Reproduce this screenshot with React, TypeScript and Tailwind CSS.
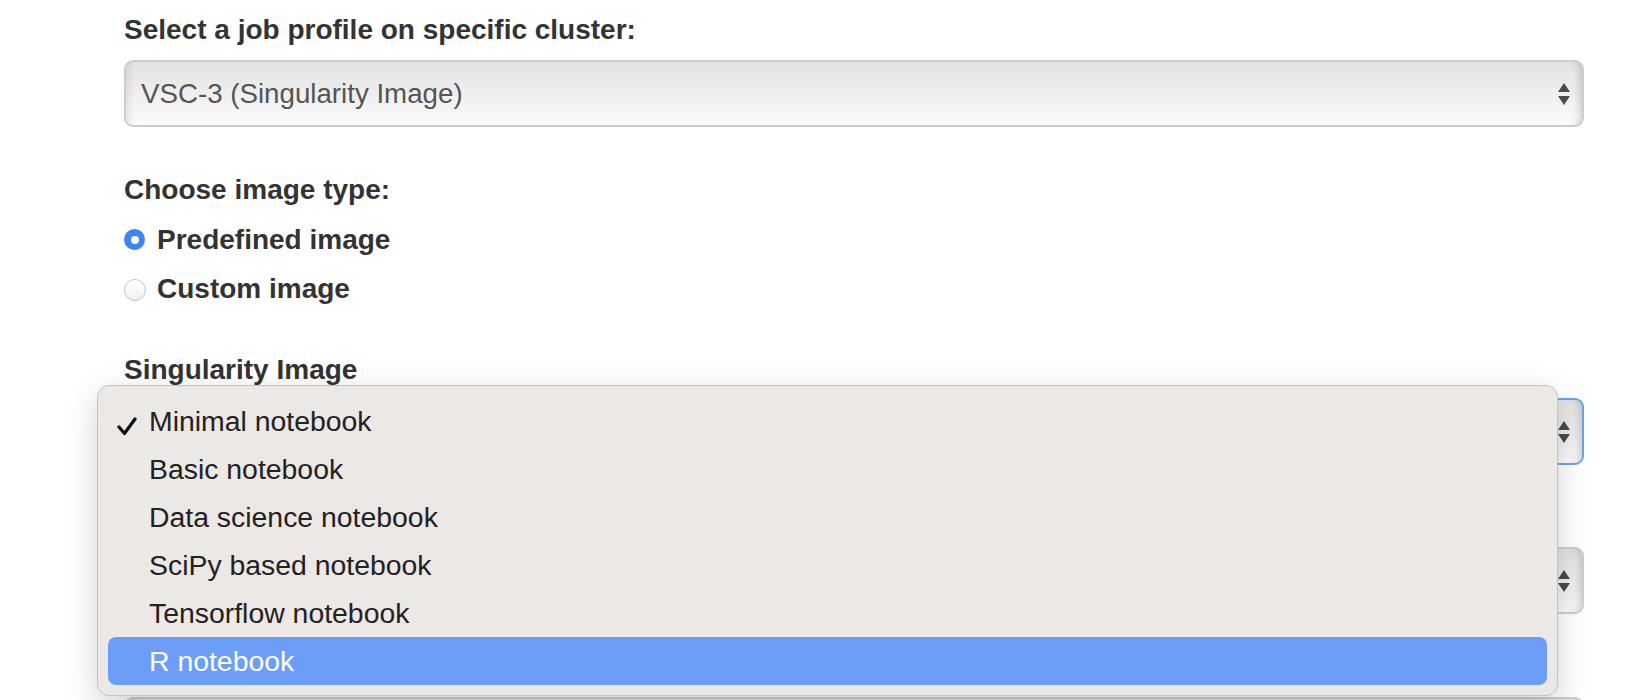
import React from "react";

function Arrows() {
  return (
    <div className="ml-auto flex flex-col items-center gap-[4px]">
      <div className="h-0 w-0 border-l-[6px] border-r-[6px] border-b-[9px] border-l-transparent border-r-transparent border-b-[#4a4a4a]" />
      <div className="h-0 w-0 border-l-[6px] border-r-[6px] border-t-[9px] border-l-transparent border-r-transparent border-t-[#4a4a4a]" />
    </div>
  );
}

function Select({ text, focused, className }: { text?: string; focused?: boolean; className?: string }) {
  return (
    <div
      className={`flex h-[67px] items-center rounded-[9px] border-2 ${
        focused ? "border-[#6fa3e6]" : "border-[#cdcdcd]"
      } bg-linear-to-b from-[#e3e3e3] to-[#fbfbfb] pl-[15px] pr-[12px] shadow-[inset_-10px_0_8px_-8px_rgba(0,0,0,0.18),inset_10px_0_8px_-8px_rgba(0,0,0,0.10)] ${className ?? ""}`}
    >
      {text ? <span className="text-[27.7px] text-[#555]">{text}</span> : null}
      <Arrows />
    </div>
  );
}

const items = [
  "Minimal notebook",
  "Basic notebook",
  "Data science notebook",
  "SciPy based notebook",
  "Tensorflow notebook",
  "R notebook",
];

export default function App() {
  return (
    <div className="relative h-[700px] w-[1634px] overflow-hidden bg-white font-['Liberation_Sans',Arial,sans-serif]">
      <div className="ml-[124px] w-[1460px] pt-[10px]">
        <div className="text-[28px] font-bold leading-[40px] text-[#333]">Select a job profile on specific cluster:</div>
        <Select className="mt-[10px]" text="VSC-3 (Singularity Image)" />
        <div className="mt-[43px] text-[28px] font-bold leading-[40px] text-[#333]">Choose image type:</div>
        <div className="mt-[5px] flex h-[49px] items-center">
          <div className="flex w-[21px] justify-center">
            <div className="flex h-[21px] w-[21px] items-center justify-center rounded-full bg-[#3d84f5]">
              <div className="h-[8px] w-[8px] rounded-full bg-white" />
            </div>
          </div>
          <span className="ml-[12px] text-[28px] font-bold leading-[49px] text-[#333]">Predefined image</span>
        </div>
        <div className="flex h-[49px] items-center">
          <div className="flex w-[21px] justify-center">
            <div className="mt-[3px] h-[22px] w-[22px] shrink-0 rounded-full border border-[#c2c2c2] bg-linear-to-b from-white to-[#f1f1f1]" />
          </div>
          <span className="ml-[12px] text-[28px] font-bold leading-[49px] text-[#333]">Custom image</span>
        </div>
        <div className="mt-[37px] text-[28px] font-bold leading-[40px] text-[#333]">Singularity Image</div>
        <Select className="mt-[8px]" focused />
        <Select className="mt-[82px]" />
        <Select className="mt-[83px]" />
      </div>

      <div className="absolute left-[97px] top-[385px] w-[1461px] rounded-[12px] border border-[#c6c3c1] bg-[#ece8e6] px-[10px] pb-[10px] pt-[11px] shadow-[0_10px_32px_rgba(0,0,0,0.18)]">
        {items.map((it, i) => {
          const hl = i === items.length - 1;
          return (
            <div
              key={it}
              className={`flex h-[48px] items-center rounded-[8px] text-[28.4px] ${
                hl ? "bg-[#6c9ef8] text-white" : "text-[#222]"
              }`}
            >
              <div className="flex w-[41px] shrink-0 justify-start pl-[9px]">
                {i === 0 ? (
                  <svg width="20" height="24" viewBox="0 0 20 24" className="mt-[5px]">
                    <polyline
                      points="2,15 7.5,21.5 18,7"
                      fill="none"
                      stroke="#111"
                      strokeWidth="3.2"
                      strokeLinecap="round"
                      strokeLinejoin="round"
                    />
                  </svg>
                ) : null}
              </div>
              <span>{it}</span>
            </div>
          );
        })}
      </div>
    </div>
  );
}
